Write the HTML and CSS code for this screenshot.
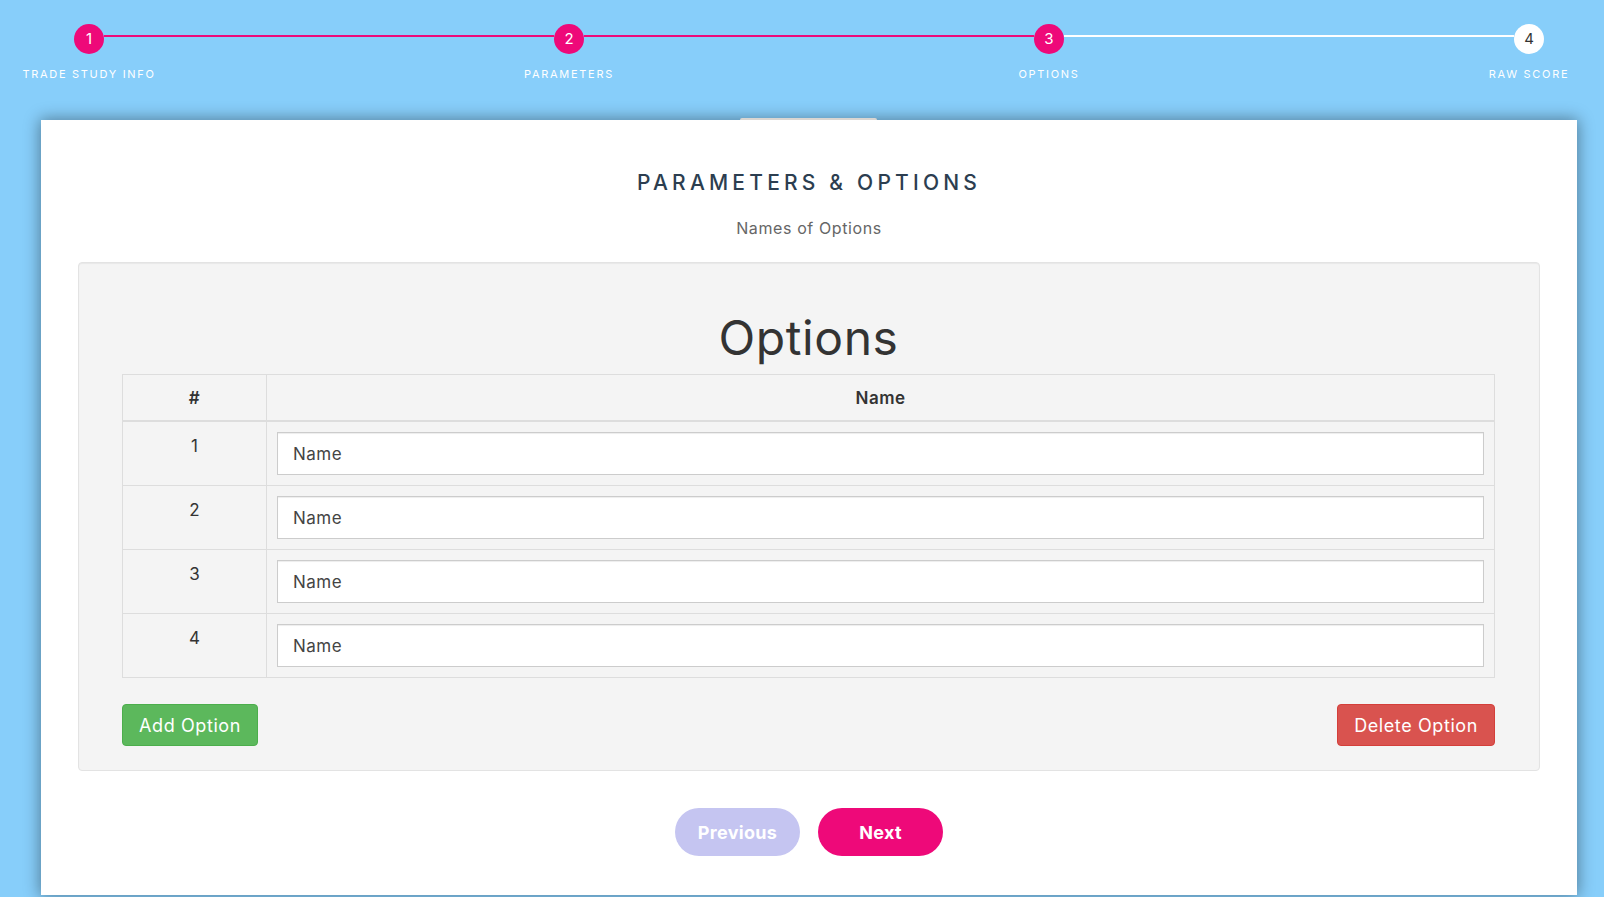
FILE: index.html
```html
<!DOCTYPE html>
<html lang="en">
<head>
<meta charset="utf-8">
<title>Parameters &amp; Options</title>
<link rel="stylesheet" href="styles.css">
</head>
<body>
<div class="page">
  <ol class="progress">
    <li class="step done"><span class="dot">1</span><span class="label">TRADE STUDY INFO</span></li>
    <li class="bar done"></li>
    <li class="step done"><span class="dot">2</span><span class="label">PARAMETERS</span></li>
    <li class="bar done"></li>
    <li class="step done"><span class="dot">3</span><span class="label">OPTIONS</span></li>
    <li class="bar"></li>
    <li class="step"><span class="dot">4</span><span class="label">RAW SCORE</span></li>
  </ol>

  <form class="card">
    <h2 class="fs-title">PARAMETERS &amp; OPTIONS</h2>
    <h3 class="fs-subtitle">Names of Options</h3>

    <div class="well">
      <h1 class="well-title">Options</h1>
      <table class="opt-table">
        <thead>
          <tr><th class="col-num">#</th><th>Name</th></tr>
        </thead>
        <tbody>
          <tr><td class="col-num">1</td><td><input class="form-control" type="text" placeholder="Name"></td></tr>
          <tr><td class="col-num">2</td><td><input class="form-control" type="text" placeholder="Name"></td></tr>
          <tr><td class="col-num">3</td><td><input class="form-control" type="text" placeholder="Name"></td></tr>
          <tr><td class="col-num">4</td><td><input class="form-control" type="text" placeholder="Name"></td></tr>
        </tbody>
      </table>
      <div class="well-actions">
        <button type="button" class="btn btn-success">Add Option</button>
        <button type="button" class="btn btn-danger">Delete Option</button>
      </div>
    </div>

    <div class="nav">
      <button type="button" class="pill prev">Previous</button>
      <button type="button" class="pill next">Next</button>
    </div>
  </form>
</div>
</body>
</html>
```

FILE: styles.css
```css
* { box-sizing: border-box; }

html, body {
  margin: 0;
  padding: 0;
  height: 100%;
}

body {
  background: #87cefa;
  font-family: Inter, "DejaVu Sans", sans-serif;
  color: #333;
  overflow: hidden;
}

.page {
  width: 1604px;
}

/* progress bar */
.progress {
  list-style: none;
  margin: 0;
  padding: 24px 60px 0 74px;
  display: flex;
  align-items: flex-start;
}

.step {
  flex: none;
  width: 30px;
  min-width: 0;
  display: flex;
  flex-direction: column;
  align-items: center;
}

.dot {
  flex: none;
  width: 30px;
  height: 30px;
  border-radius: 50%;
  background: #ffffff;
  color: #333;
  font-size: 15px;
  line-height: 30px;
  text-align: center;
}

.step.done .dot {
  background: #ee0979;
  color: #fff;
}

.label {
  flex: none;
  margin-top: 13px;
  white-space: nowrap;
  color: #fff;
  font-size: 11px;
  line-height: 14px;
  letter-spacing: 1.7px;
}

.bar {
  flex: 1 1 0;
  height: 2px;
  margin-top: 11px;
  background: #ffffff;
}

.bar.done {
  background: #ee0979;
}

/* card */
.card {
  position: relative;
  margin: 39px 0 0 41px;
  width: 1536px;
  height: 775px;
  background: #fff;
  box-shadow: 0 0 15px 1px rgba(0, 0, 0, 0.4);
  padding: 51px 37px 0 37px;
}

.card::before {
  content: "";
  position: absolute;
  top: -2px;
  left: 699px;
  width: 137px;
  height: 2px;
  border-radius: 2px 2px 0 0;
  background: #d9d6d2;
}

.fs-title {
  margin: 0;
  text-align: center;
  font-size: 21px;
  line-height: 24px;
  font-weight: 500;
  letter-spacing: 4.2px;
  color: #2c3e50;
}

.fs-subtitle {
  margin: 23px 0 0 0;
  text-align: center;
  font-size: 16px;
  line-height: 20px;
  font-weight: 400;
  letter-spacing: 0.6px;
  color: #666;
}

.well {
  margin-top: 24px;
  background: #f4f4f4;
  border: 1px solid #e3e3e3;
  border-radius: 4px;
  box-shadow: inset 0 1px 1px rgba(0, 0, 0, 0.05);
  padding: 0 44px 24px 43px;
}

.well-title {
  margin: 47px 0 8px 0;
  text-align: center;
  font-size: 48px;
  line-height: 56px;
  font-weight: 400;
  letter-spacing: 0.6px;
  color: #333;
}

.opt-table {
  width: 100%;
  border-collapse: collapse;
  border: 1px solid #ddd;
}

.opt-table th {
  padding: 12px 8px 11px;
  font-size: 17px;
  line-height: 22px;
  font-weight: 600;
  letter-spacing: 0.5px;
  color: #333;
  text-align: center;
  border: 1px solid #ddd;
  border-bottom: 2px solid #ddd;
}

.opt-table td {
  padding: 10px;
  border: 1px solid #ddd;
  vertical-align: top;
}

.opt-table .col-num {
  width: 144px;
  text-align: center;
  font-size: 17px;
  line-height: 22px;
  color: #333;
}

td.col-num {
  padding-top: 13px;
}

.form-control {
  display: block;
  width: 100%;
  height: 43px;
  padding: 0 15px;
  font-family: inherit;
  font-size: 17px;
  letter-spacing: 0.5px;
  color: #444;
  background: #fff;
  border: 1px solid #ccc;
  border-radius: 0;
  box-shadow: inset 0 1px 1px rgba(0, 0, 0, 0.075);
}

.form-control::placeholder {
  color: #444;
  opacity: 1;
}

.well-actions {
  margin-top: 26px;
  display: flex;
  justify-content: space-between;
}

.btn {
  height: 42px;
  padding: 0 16px;
  font-family: inherit;
  font-size: 18px;
  letter-spacing: 0.6px;
  color: #fff;
  border-radius: 4px;
  border: 1px solid transparent;
  cursor: pointer;
}

.btn-success {
  background: #5cb85c;
  border-color: #4cae4c;
}

.btn-danger {
  background: #d9534f;
  border-color: #d43f3a;
}

.nav {
  margin-top: 37px;
  display: flex;
  justify-content: center;
  gap: 18px;
}

.pill {
  width: 125px;
  height: 48px;
  border: 0;
  border-radius: 24px;
  font-family: inherit;
  font-size: 18px;
  font-weight: 700;
  letter-spacing: 0.3px;
  color: #fff;
  cursor: pointer;
}

.pill.prev {
  background: #c5c5f1;
}

.pill.next {
  background: #ee0979;
}
```
